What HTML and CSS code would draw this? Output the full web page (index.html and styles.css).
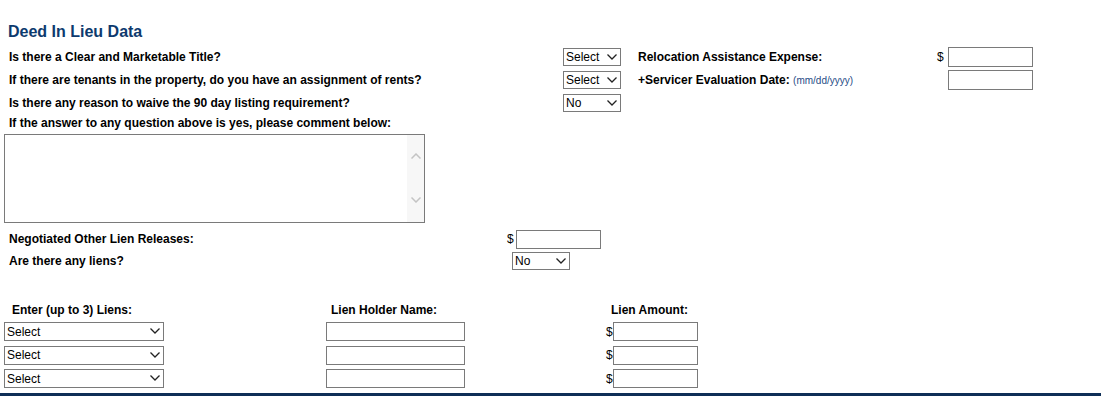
FILE: index.html
```html
<!DOCTYPE html>
<html>
<head>
    <title>Deed In Lieu Data</title>
    <link rel="stylesheet" href="styles.css">
</head>
<body>
    <div class="page">
        <h2 class="title">Deed In Lieu Data</h2>

        <div class="top-grid">
            <label class="q">Is there a Clear and Marketable Title?</label>
            <span class="sel sel-sm">
                <select><option>Select</option><option>Yes</option><option>No</option></select>
                <svg class="chev" width="10" height="6" viewBox="0 0 10 6"><path d="M0.5 0.5 L5 5 L9.5 0.5" /></svg>
            </span>
            <label class="q q-side">Relocation Assistance Expense:</label>
            <span class="cur">$</span>
            <input type="text" class="amt">

            <label class="q">If there are tenants in the property, do you have an assignment of rents?</label>
            <span class="sel sel-sm">
                <select><option>Select</option><option>Yes</option><option>No</option></select>
                <svg class="chev" width="10" height="6" viewBox="0 0 10 6"><path d="M0.5 0.5 L5 5 L9.5 0.5" /></svg>
            </span>
            <label class="q q-side">+Servicer Evaluation Date: <span class="hint">(mm/dd/yyyy)</span></label>
            <span></span>
            <input type="text" class="amt">

            <label class="q">Is there any reason to waive the 90 day listing requirement?</label>
            <span class="sel sel-sm">
                <select><option>No</option><option>Yes</option></select>
                <svg class="chev" width="10" height="6" viewBox="0 0 10 6"><path d="M0.5 0.5 L5 5 L9.5 0.5" /></svg>
            </span>

            <label class="q full">If the answer to any question above is yes, please comment below:</label>
        </div>

        <div class="comment">
            <textarea></textarea>
            <div class="scroll">
                <svg width="10" height="6" viewBox="0 0 10 6"><path d="M0.5 5.5 L5 1 L9.5 5.5" /></svg>
                <svg width="10" height="6" viewBox="0 0 10 6"><path d="M0.5 0.5 L5 5 L9.5 0.5" /></svg>
            </div>
        </div>

        <div class="mid-grid">
            <label class="q">Negotiated Other Lien Releases:</label>
            <span class="money"><span class="cur">$</span><input type="text" class="amt amt-sm"></span>

            <label class="q">Are there any liens?</label>
            <span class="sel sel-sm sel-liens">
                <select><option>No</option><option>Yes</option></select>
                <svg class="chev" width="10" height="6" viewBox="0 0 10 6"><path d="M0.5 0.5 L5 5 L9.5 0.5" /></svg>
            </span>
        </div>

        <div class="lien-grid">
            <label class="q head-1">Enter (up to 3) Liens:</label>
            <label class="q head">Lien Holder Name:</label>
            <label class="q head">Lien Amount:</label>

            <span class="sel sel-lg">
                <select><option>Select</option></select>
                <svg class="chev" width="10" height="6" viewBox="0 0 10 6"><path d="M0.5 0.5 L5 5 L9.5 0.5" /></svg>
            </span>
            <input type="text" class="name">
            <span class="money"><span class="cur">$</span><input type="text" class="amt amt-sm"></span>

            <span class="sel sel-lg">
                <select><option>Select</option></select>
                <svg class="chev" width="10" height="6" viewBox="0 0 10 6"><path d="M0.5 0.5 L5 5 L9.5 0.5" /></svg>
            </span>
            <input type="text" class="name">
            <span class="money"><span class="cur">$</span><input type="text" class="amt amt-sm"></span>

            <span class="sel sel-lg">
                <select><option>Select</option></select>
                <svg class="chev" width="10" height="6" viewBox="0 0 10 6"><path d="M0.5 0.5 L5 5 L9.5 0.5" /></svg>
            </span>
            <input type="text" class="name">
            <span class="money"><span class="cur">$</span><input type="text" class="amt amt-sm"></span>
        </div>
    </div>
    <div class="rule"></div>
</body>
</html>
```

FILE: styles.css
```css
body { margin: 0; font-family: "Liberation Sans", Arial, sans-serif; font-size: 12px; color: #000; background: #fff; }
.page { padding: 22px 0 0 4px; height: 371px; }
.title { margin: 0 0 3px 4px; font-size: 16px; line-height: 20px; font-weight: bold; color: #0d3a6e; }
.q { font-weight: bold; padding-left: 5px; white-space: nowrap; }
.q-side { padding-left: 0; }
.hint { font-weight: normal; font-size: 10px; color: #1f4b86; }
.cur { font-size: 12px; }

.top-grid { display: grid; grid-template-columns: 559px 75px 299px 11px 85px; grid-template-rows: 23px 23px 23px 17px; align-items: center; }
.full { grid-column: 1 / -1; }

input { font-family: inherit; font-size: 12px; margin: 0; padding: 0 2px; border: 1px solid #7a7a7a; background: #fff; box-sizing: border-box; }
.amt { width: 85px; height: 20px; }
.amt-sm { height: 19px; }
.name { width: 139px; height: 19px; }

.sel { position: relative; display: inline-block; justify-self: start; }
.sel select { display: block; appearance: none; -webkit-appearance: none; font-family: inherit; font-size: 12px; color: #000; margin: 0; padding: 0 0 0 2px; border: 1px solid #7a7a7a; border-radius: 0; background: #fff; box-sizing: border-box; height: 18px; }
.sel-sm select { width: 58px; }
.sel-lg select { width: 160px; height: 19px; }
.chev { position: absolute; right: 4px; top: 6px; pointer-events: none; }
.chev path { fill: none; stroke: #222; stroke-width: 1.3; }

.comment { display: flex; width: 421px; height: 89px; margin-top: 3px; border: 1px solid #7a7a7a; box-sizing: border-box; }
.comment textarea { flex: 1; border: none; outline: none; resize: none; margin: 0; padding: 2px; font-family: inherit; font-size: 12px; }
.scroll { width: 17px; background: #f7f7f7; display: flex; flex-direction: column; justify-content: space-between; align-items: center; padding: 18px 0 19px; }
.scroll path { fill: none; stroke: #c4c4c4; stroke-width: 1.5; }

.mid-grid { display: grid; grid-template-columns: 503px auto; grid-template-rows: 22px 22px; align-items: center; margin-top: 5px; }
.money { display: flex; align-items: center; gap: 2px; }
.sel-liens { margin-left: 5px; }

.lien-grid { display: grid; grid-template-columns: 322px 280px auto; grid-template-rows: 20px 23px 24px 23px; align-items: center; margin-top: 28px; }
.head-1 { padding-left: 8px; }
.lien-grid .money { gap: 0; }
.lien-grid .name { justify-self: start; }

.rule { height: 3px; background: #0e2f57; }
```
